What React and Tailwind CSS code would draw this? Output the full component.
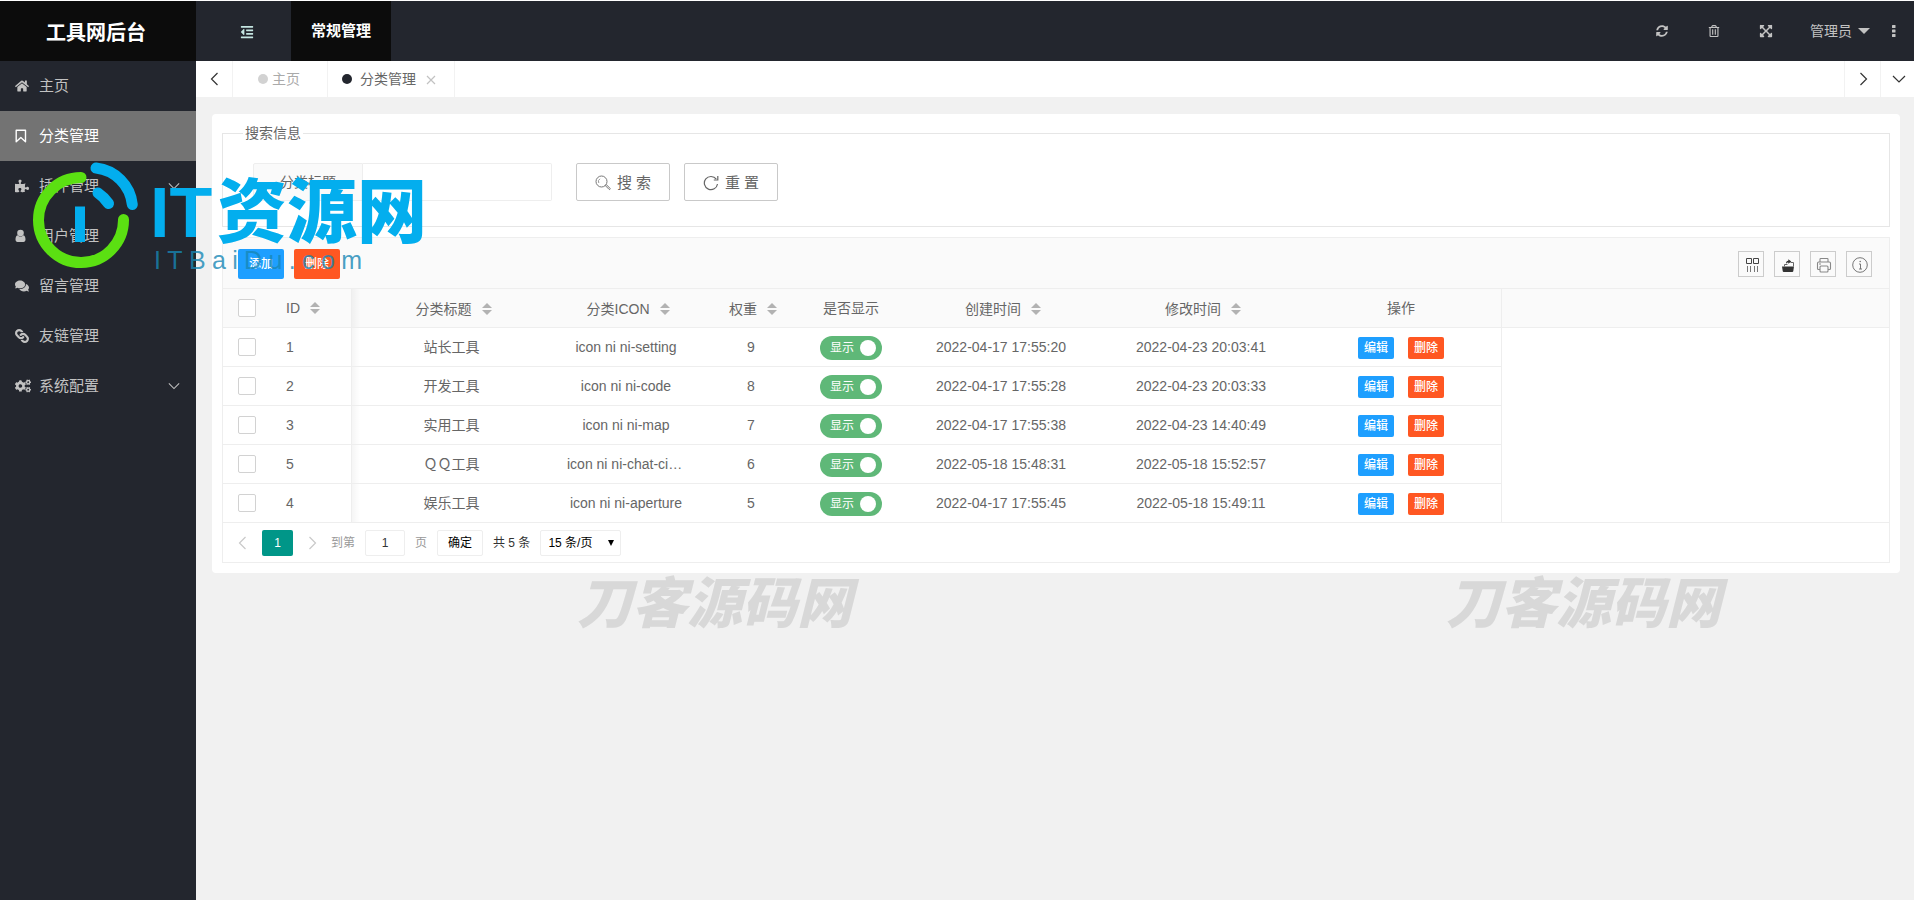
import { useState } from 'react';
import {
  FaHome,
  FaPuzzlePiece,
  FaComments,
  FaLink,
  FaCogs,
  FaOutdent,
  FaSyncAlt,
  FaRegTrashAlt,
  FaExpandArrowsAlt,
} from 'react-icons/fa';

const menu = [
  { label: '主页', icon: <FaHome className="size-3.5" /> },
  { label: '分类管理', icon: <BookmarkIcon />, active: true },
  { label: '插件管理', icon: <FaPuzzlePiece className="size-3.5" />, children: true },
  { label: '用户管理', icon: <UserIcon /> },
  { label: '留言管理', icon: <FaComments className="size-3.5" /> },
  { label: '友链管理', icon: <FaLink className="size-3.5 rotate-90" /> },
  { label: '系统配置', icon: <FaCogs className="size-4" />, children: true },
];

const rows = [
  { id: 1, title: '站长工具', icon: 'icon ni ni-setting', weight: 9, created: '2022-04-17 17:55:20', updated: '2022-04-23 20:03:41' },
  { id: 2, title: '开发工具', icon: 'icon ni ni-code', weight: 8, created: '2022-04-17 17:55:28', updated: '2022-04-23 20:03:33' },
  { id: 3, title: '实用工具', icon: 'icon ni ni-map', weight: 7, created: '2022-04-17 17:55:38', updated: '2022-04-23 14:40:49' },
  { id: 5, title: 'ＱＱ工具', icon: 'icon ni ni-chat-circle', weight: 6, created: '2022-05-18 15:48:31', updated: '2022-05-18 15:52:57' },
  { id: 4, title: '娱乐工具', icon: 'icon ni ni-aperture', weight: 5, created: '2022-04-17 17:55:45', updated: '2022-05-18 15:49:11' },
];

function BookmarkIcon() {
  return (
    <svg viewBox="0 0 14 14" className="size-3.5" fill="none" stroke="currentColor" strokeWidth="1.4" strokeLinejoin="round">
      <path d="M1.200 1.200h9.300v11.600L5.850 8.600 1.200 12.800z" />
    </svg>
  );
}

function UserIcon() {
  return (
    <svg viewBox="0 0 14 14" className="size-3.5" fill="currentColor">
      <circle cx="5.500" cy="4" r="3.300" />
      <path d="M2.500 6.300C1.100 6.800.5 8.300.5 10.500c0 1.600.8 2.500 2 2.500h6c1.200 0 2-.9 2-2.500 0-2.200-.6-3.700-2-4.200-1.600 1.700-4.400 1.700-6 0z" />
    </svg>
  );
}

function Chevron({ dir, className }) {
  const paths = {
    left: 'M9.500 1 3.500 7l6 6',
    right: 'M4.500 1l6 6-6 6',
    down: 'M1 4l6 6 6-6',
  };
  return (
    <svg viewBox="0 0 14 14" className={className} fill="none" stroke="currentColor" strokeWidth="1.2">
      <path d={paths[dir]} />
    </svg>
  );
}

function SortIcon() {
  return (
    <svg viewBox="0 0 10 12" className="h-3 w-2.5" fill="#b2b2b2">
      <path d="M5 0l5 5H0z" />
      <path d="M0 7h10l-5 5z" />
    </svg>
  );
}

function ColumnsIcon() {
  return (
    <svg viewBox="0 0 16 16" className="size-4" fill="none" stroke="#444">
      <path d="M2.500 1.500h5v5h-5zM9.500 1.500h5v5h-5z" />
      <path d="M3.500 9v6M6.500 9v6M10.500 9v6M13.500 9v6" stroke="#777" />
    </svg>
  );
}

function ExportIcon() {
  return (
    <svg viewBox="0 0 16 16" className="size-4" fill="#333">
      <path d="M2 9.500h12L13.300 14c-.1.600-.4 1-1 1H3.700c-.6 0-.9-.4-1-1z" />
      <path d="M4.500 9.500V7.500h3M10.500 5.500h3v4" fill="none" stroke="#666" />
      <path d="M6 7C6 4.800 6.800 3.800 8.300 3.800V2.200l3 2.300-3 2.300V5.500C7.300 5.500 6.500 6 6 7z" />
    </svg>
  );
}

function PrintIcon() {
  return (
    <svg viewBox="0 0 16 16" className="size-4" fill="none" stroke="#888" strokeWidth="1.100">
      <path d="M4 5V2.200c0-.4.3-.7.7-.7h6.600c.4 0 .7.3.7.7V5" />
      <path d="M4 12.500H2.500c-.6 0-1-.4-1-1V6.200c0-.7.5-1.200 1.200-1.200h10.600c.7 0 1.200.5 1.200 1.200v5.300c0 .6-.4 1-1 1H12" />
      <rect x="4" y="9" width="8" height="6" rx="1" />
      <path d="M3 7h2" />
    </svg>
  );
}

function InfoIcon() {
  return (
    <svg viewBox="0 0 16 16" className="size-4" fill="none" stroke="#777">
      <circle cx="8" cy="8" r="7.300" />
      <path d="M7 7h1.500v5M7 12h3" />
      <circle cx="8.200" cy="4.500" r=".8" fill="#777" stroke="none" />
    </svg>
  );
}

function SearchIcon() {
  return (
    <svg viewBox="0 0 16 16" className="size-4" fill="none" stroke="#777">
      <circle cx="6.500" cy="6.500" r="5.500" />
      <path d="M3.800 8A3.200 3.200 0 0 1 5 3.800" stroke="#999" />
      <path d="M10.300 10.600l1-1 3.700 3.700c.3.300.3.700 0 1s-.7.300-1 0z" />
    </svg>
  );
}

function ResetIcon() {
  return (
    <svg viewBox="0 0 16 16" className="size-4" fill="none" stroke="#666" strokeWidth="1.200">
      <path d="M14.500 9A6.600 6.600 0 1 1 13.300 4.200" />
      <path d="M14.800 1v4h-4" />
    </svg>
  );
}

function Sidebar() {
  return (
    <nav className="w-[196px] shrink-0 bg-[#23262e]">
      <ul>
        {menu.map((item) => (
          <li key={item.label}>
            <a
              href="#"
              className={`flex h-[50px] items-center pr-4 pl-[15px] text-[15px] ${item.active ? 'bg-[#737373] text-white' : 'text-[#c2c2c2]'}`}
            >
              <span className="flex w-6 items-center">{item.icon}</span>
              <span className="flex-1">{item.label}</span>
              {item.children && <Chevron dir="down" className="size-3" />}
            </a>
          </li>
        ))}
      </ul>
    </nav>
  );
}

function Header() {
  return (
    <header className="flex h-[61px] border-t border-white bg-[#23262e] text-[#c2c2c2]">
      <h1 className="flex w-[196px] shrink-0 items-center justify-center bg-[#0c0c0c] pt-1 pr-1 text-xl font-bold text-white">工具网后台</h1>
      <button type="button" aria-label="收起菜单" className="flex w-[95px] items-center justify-center pt-0.5 pl-1.5 text-[#c5e6e2]">
        <FaOutdent className="size-3.5" />
      </button>
      <a href="#" className="flex w-[100px] items-center justify-center bg-[#0c0c0c] text-[15px] font-bold text-white">常规管理</a>
      <div className="ml-auto flex">
        <button type="button" aria-label="刷新" className="flex w-13 items-center justify-center"><FaSyncAlt className="size-3" /></button>
        <button type="button" aria-label="清除缓存" className="flex w-13 items-center justify-center"><FaRegTrashAlt className="size-3" /></button>
        <button type="button" aria-label="全屏" className="flex w-13 items-center justify-center"><FaExpandArrowsAlt className="size-3.5" /></button>
        <button type="button" className="flex w-[82px] items-center gap-1.5 pl-[18px] text-sm">
          管理员
          <svg viewBox="0 0 12 6" className="h-1.5 w-3 shrink-0" fill="currentColor"><path d="M0 0h12L6 6z" /></svg>
        </button>
        <button type="button" aria-label="更多" className="flex w-10 items-center justify-center">
          <svg viewBox="0 0 4 12" className="h-3 w-1" fill="currentColor">
            <rect width="3.500" height="3" rx=".5" />
            <rect y="4.500" width="3.500" height="3" rx=".5" />
            <rect y="9" width="3.500" height="3" rx=".5" />
          </svg>
        </button>
      </div>
    </header>
  );
}

function TabBar() {
  return (
    <div className="flex h-9 bg-white text-sm">
      <button type="button" aria-label="向左" className="flex w-[37px] items-center justify-center border-r border-[#f2f2f2] pl-0.5 text-[#333]">
        <Chevron dir="left" className="size-3.5" />
      </button>
      <a href="#" className="flex w-[95px] items-center gap-1 border-r border-[#f2f2f2] pl-[25px] text-[#aaa]">
        <span className="size-2.5 rounded-full bg-[#d2d2d2]" />
        主页
      </a>
      <div className="flex w-[127px] items-center border-r border-[#f2f2f2] pl-3.5 text-[#666]">
        <span className="mr-2 size-2.5 rounded-full bg-[#23262e]" />
        <a href="#">分类管理</a>
        <button type="button" aria-label="关闭" className="ml-2.5 pt-0.5 text-[#c2c2c2]">
          <svg viewBox="0 0 10 10" className="size-2.5" fill="none" stroke="currentColor" strokeWidth="1.200"><path d="M1 1l8 8M9 1L1 9" /></svg>
        </button>
      </div>
      <button type="button" aria-label="向右" className="ml-auto flex w-9 items-center justify-center border-l border-[#f2f2f2] text-[#333]">
        <Chevron dir="right" className="size-3.5" />
      </button>
      <button type="button" aria-label="标签操作" className="flex w-[34px] items-center justify-center border-l border-[#f2f2f2] pl-0.5 text-[#333]">
        <Chevron dir="down" className="size-3.5" />
      </button>
    </div>
  );
}

function SearchForm() {
  return (
    <fieldset className="border border-[#e6e6e6] pb-[25px]">
      <legend className="ml-5 px-0.5 text-sm leading-[18px]">搜索信息</legend>
      <form className="flex pt-[21px] pl-[30px]" onSubmit={(e) => e.preventDefault()}>
        <label htmlFor="title" className="flex h-[38px] w-[110px] items-center justify-center rounded-l-xs border border-[#eee] bg-[#fafafa] text-sm">
          分类标题
        </label>
        <input id="title" type="text" className="h-[38px] w-[189px] rounded-r-xs border border-l-0 border-[#eee] px-2.5 text-sm outline-none" />
        <button type="submit" className="ml-6 flex h-[38px] w-[94px] items-center justify-center gap-1.5 rounded-xs border border-[#c9c9c9] pt-0.5 text-[15px]">
          <SearchIcon />
          搜 索
        </button>
        <button type="reset" className="ml-3.5 flex h-[38px] w-[94px] items-center justify-center gap-1.5 rounded-xs border border-[#c9c9c9] pt-0.5 text-[15px]">
          <ResetIcon />
          重 置
        </button>
      </form>
    </fieldset>
  );
}

function Toolbar() {
  const tools = [
    { label: '筛选列', icon: <ColumnsIcon /> },
    { label: '导出', icon: <ExportIcon /> },
    { label: '打印', icon: <PrintIcon /> },
    { label: '提示', icon: <InfoIcon /> },
  ];
  return (
    <div className="flex h-[51px] items-center border-b border-[#eee] bg-[#fafafa] pt-0.5 pr-[17px] pl-[15px]">
      <button type="button" className="h-[30px] w-[46px] rounded-xs bg-[#1e9fff] text-xs font-medium text-white">添加</button>
      <button type="button" className="ml-2.5 h-[30px] w-[46px] rounded-xs bg-[#ff5722] text-xs font-medium text-white">删除</button>
      <div className="ml-auto flex gap-2.5">
        {tools.map((tool) => (
          <button key={tool.label} type="button" aria-label={tool.label} className="flex size-[26px] items-center justify-center border border-[#ccc] pt-0.5 pl-0.5">
            {tool.icon}
          </button>
        ))}
      </div>
    </div>
  );
}

function Checkbox({ label }) {
  return (
    <input
      type="checkbox"
      aria-label={label}
      className="block size-[18px] appearance-none rounded-xs border border-[#d2d2d2] bg-white checked:bg-[#5fb878]"
    />
  );
}

function Switch({ label }) {
  const [on, setOn] = useState(true);
  return (
    <label className={`relative mx-auto mt-0.5 flex h-6 w-[62px] items-center justify-between rounded-full pr-1.5 pl-2.5 text-xs text-white ${on ? 'bg-[#5fb878]' : 'bg-[#d2d2d2]'}`}>
      <input type="checkbox" className="sr-only" aria-label={label} checked={on} onChange={(e) => setOn(e.target.checked)} />
      {on ? '显示' : '隐藏'}
      <span className="size-4 rounded-full bg-white" />
    </label>
  );
}

function HeadCell({ children, sortable, className = '' }) {
  return (
    <th className={`h-[39px] border-b border-[#eee] font-normal ${sortable ? 'pr-[11px] pl-[15px]' : 'px-[15px]'} ${className}`}>
      <div className={`flex items-center justify-center gap-2.5 ${sortable ? 'pt-px' : ''}`}>
        {children}
        {sortable && <SortIcon />}
      </div>
    </th>
  );
}

function DataTable() {
  const cell = 'h-[39px] border-b border-[#eee] px-4 truncate';
  const edge = 'bg-[linear-gradient(to_right,rgba(0,0,0,0.04),transparent_8px)]';
  return (
    <table className="w-full table-fixed border-separate border-spacing-0 text-center text-sm">
      <colgroup>
        <col className="w-12" />
        <col className="w-[81px]" />
        <col className="w-[199px]" />
        <col className="w-[150px]" />
        <col className="w-[100px]" />
        <col className="w-[100px]" />
        <col className="w-[200px]" />
        <col className="w-[200px]" />
        <col className="w-[201px]" />
        <col />
      </colgroup>
      <thead className="bg-[#fafafa]">
        <tr>
          <HeadCell><Checkbox label="全选" /></HeadCell>
          <th className="h-[39px] border-r border-b border-[#eee] px-[15px] font-normal">
            <div className="flex items-center gap-2.5">ID<SortIcon /></div>
          </th>
          <HeadCell sortable className={edge}>分类标题</HeadCell>
          <HeadCell sortable>分类ICON</HeadCell>
          <HeadCell sortable>权重</HeadCell>
          <HeadCell>是否显示</HeadCell>
          <HeadCell sortable>创建时间</HeadCell>
          <HeadCell sortable>修改时间</HeadCell>
          <HeadCell className="border-r">操作</HeadCell>
          <td className="border-b border-[#eee]" />
        </tr>
      </thead>
      <tbody>
        {rows.map((row, i) => (
          <tr key={row.id}>
            <td className="h-[39px] border-b border-[#eee] px-[15px]"><Checkbox label={`选择 ${row.title}`} /></td>
            <td className="h-[39px] border-r border-b border-[#eee] px-[15px] text-left">{row.id}</td>
            <td className={`${cell} ${edge}`}>{row.title}</td>
            <td className={cell}>{row.icon}</td>
            <td className={cell}>{row.weight}</td>
            <td className={cell}><Switch label={`${row.title} 是否显示`} /></td>
            <td className={cell}>{row.created}</td>
            <td className={cell}>{row.updated}</td>
            <td className={`${cell} border-r`}>
              <div className="mt-0.5 flex justify-center gap-3.5">
                <button type="button" className="h-[22px] w-9 rounded-xs bg-[#1e9fff] text-xs font-medium text-white">编辑</button>
                <button type="button" className="h-[22px] w-9 rounded-xs bg-[#ff5722] text-xs font-medium text-white">删除</button>
              </div>
            </td>
            <td className={i === rows.length - 1 ? 'border-b border-[#eee]' : ''} />
          </tr>
        ))}
      </tbody>
    </table>
  );
}

function Pagination() {
  return (
    <div className="flex h-[39px] items-center pl-[13px] text-xs text-[#333]">
      <button type="button" aria-label="上一页" className="flex w-[26px] justify-start text-[#c9c9c9]">
        <Chevron dir="left" className="size-3.5" />
      </button>
      <button type="button" className="h-[26px] w-[31px] rounded-xs bg-[#009688] text-white">1</button>
      <button type="button" aria-label="下一页" className="flex w-[38px] justify-center text-[#c9c9c9]">
        <Chevron dir="right" className="size-3.5" />
      </button>
      <label htmlFor="page" className="text-[#999]">到第</label>
      <input id="page" type="text" defaultValue="1" className="mx-2.5 h-[26px] w-10 rounded-xs border border-[#eee] text-center outline-none" />
      <span className="text-[#999]">页</span>
      <button type="button" className="mx-2.5 h-[26px] w-[46px] rounded-xs border border-[#eee] text-black">确定</button>
      <span>共 5 条</span>
      <div className="relative ml-2.5">
        <select aria-label="每页条数" className="h-[26px] w-[81px] appearance-none rounded-xs border border-[#eee] pl-[7px] text-black outline-none">
          <option>15 条/页</option>
          <option>30 条/页</option>
          <option>50 条/页</option>
        </select>
        <svg viewBox="0 0 6 6" className="pointer-events-none absolute top-2.5 right-[7px] size-1.5" fill="#000"><path d="M0 0h6L3 6z" /></svg>
      </div>
    </div>
  );
}

function BrandMark() {
  return (
    <div className="pointer-events-none absolute top-[160px] left-[30px] flex">
      <svg viewBox="30 160 112 112" className="size-28" fill="none" strokeWidth="11" strokeLinecap="round">
        <path d="M81 177.500A42.500 42.500 0 1 0 123.500 219.500" stroke="#5be012" />
        <path d="M96 168A41 41 0 0 1 132.300 204.500" stroke="#03aeee" />
        <path d="M98 193q6 4 10.500 10.500" stroke="#03aeee" />
        <path d="M75 206.500h10V242H75z" fill="#03aeee" stroke="none" />
      </svg>
      <div className="ml-2 pt-[18px]">
        <div className="flex items-center text-[70px] leading-[70px] font-black text-[#03aeee]">
          <span className="w-[67px]">IT</span>
          <span>资源网</span>
        </div>
        <div className="ml-1 flex w-[208px] justify-between text-[25px] leading-6 text-[#1787b5]/80">
          {[...'ITBaiDu.com'].map((ch, i) => <span key={i}>{ch}</span>)}
        </div>
      </div>
    </div>
  );
}

export default function App() {
  return (
    <div className="relative flex min-h-screen flex-col overflow-hidden bg-[#f1f1f1] font-['Liberation_Sans','Noto_Sans_CJK_SC',sans-serif] text-[#666]">
      <Header />
      <div className="flex flex-1">
        <Sidebar />
        <div className="min-w-0 flex-1">
          <TabBar />
          <main className="mt-[17px] mr-3.5 ml-4 rounded bg-white p-2.5">
            <SearchForm />
            <section className="mt-2.5 border border-[#eee]">
              <Toolbar />
              <DataTable />
              <Pagination />
            </section>
          </main>
        </div>
      </div>
      <BrandMark />
      <div className="pointer-events-none absolute top-[571px] left-[577px] text-[55px] leading-[66px] font-black text-[#d8d8d8] italic">刀客源码网</div>
      <div className="pointer-events-none absolute top-[571px] left-[1446px] text-[55px] leading-[66px] font-black text-[#d8d8d8] italic">刀客源码网</div>
    </div>
  );
}
